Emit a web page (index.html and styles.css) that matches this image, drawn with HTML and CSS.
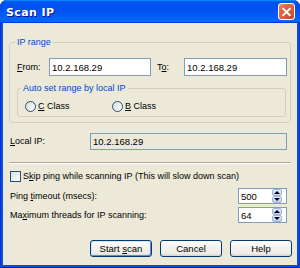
FILE: index.html
```html
<!DOCTYPE html>
<html>
<head>
<meta charset="utf-8">
<link rel="stylesheet" href="styles.css">
</head>
<body>
<div class="window">
  <div class="titlebar">
    <span class="title">Scan IP</span>
    <span class="close" aria-label="Close">
      <svg width="16" height="16" viewBox="0 0 16 16"><path d="M4.5 4.5 L11.5 11.5 M11.5 4.5 L4.5 11.5" stroke="#fff" stroke-width="2" stroke-linecap="square" fill="none"/></svg>
    </span>
  </div>
  <div class="client">
    <fieldset class="group range">
      <legend>IP range</legend>
      <div class="range-row">
        <span class="lbl"><u>F</u>rom:</span>
        <span class="field">10.2.168.29</span>
        <span class="lbl to">T<u>o</u>:</span>
        <span class="field">10.2.168.29</span>
      </div>
      <fieldset class="group auto">
        <legend>Auto set range by local IP</legend>
        <div class="radios">
          <span class="radio"><span class="dot"></span><span><u>C</u> Class</span></span>
          <span class="radio"><span class="dot"></span><span><u>B</u> Class</span></span>
        </div>
      </fieldset>
    </fieldset>

    <div class="local-row">
      <span class="lbl"><u>L</u>ocal IP:</span>
      <span class="field readonly">10.2.168.29</span>
    </div>

    <div class="sep"></div>

    <div class="check-row">
      <span class="checkbox"></span>
      <span>S<u>k</u>ip ping while scanning IP (This will slow down scan)</span>
    </div>

    <div class="spin-row first">
      <span class="lbl">Ping <u>t</u>imeout (msecs):</span>
      <span class="spin">
        <span class="spin-val">500</span>
        <span class="spin-btns"><span class="sb up"></span><span class="sb down"></span></span>
      </span>
    </div>
    <div class="spin-row">
      <span class="lbl">Ma<u>x</u>imum threads for IP scanning:</span>
      <span class="spin">
        <span class="spin-val">64</span>
        <span class="spin-btns"><span class="sb up"></span><span class="sb down"></span></span>
      </span>
    </div>

    <div class="buttons">
      <span class="btn default"><span>Start <u>s</u>can</span></span>
      <span class="btn"><span>Cancel</span></span>
      <span class="btn"><span>Help</span></span>
    </div>
  </div>
</div>
</body>
</html>
```
FILE: styles.css
```css
* { box-sizing: border-box; }
html, body { margin: 0; padding: 0; background: #fff; }
body {
  font-family: "Liberation Sans", Arial, sans-serif;
  font-size: 9px;
  line-height: 11px;
  color: #000;
}
u { text-underline-offset: 1px; }

.window {
  width: 300px;
  height: 268px;
  display: flex;
  flex-direction: column;
  border-radius: 7px 7px 0 0;
  overflow: hidden;
  background: #0B4FDC;
  box-shadow: inset 1px 0 #0831D9, inset -1px 0 #0831D9, inset 0 -1px #001EA0;
}

.titlebar {
  flex: none;
  height: 23px;
  display: flex;
  align-items: center;
  justify-content: space-between;
  padding: 0 5px 0 6px;
  background: linear-gradient(180deg, #0997ff 0, #0053ee 8%, #0050ee 40%, #0066ff 88%, #0066ff 93%, #005bff 95%, #003dd7 96%, #003dd7 100%);
}
.title {
  font-family: "DejaVu Sans", sans-serif;
  font-weight: bold;
  font-size: 11px;
  line-height: 13px;
  letter-spacing: 0.4px;
  color: #fff;
  text-shadow: 1px 1px #0F1089;
  margin-top: 1px;
}
.close {
  width: 17px;
  height: 17px;
  border: 1px solid #fff;
  border-radius: 3px;
  display: flex;
  align-items: center;
  justify-content: center;
  background: radial-gradient(circle at 80% 85%, #CC4628 0, #D9552F 30%, #E26A45 70%, #EC9A80 100%);
}
.close svg { display: block; }

.client {
  flex: 1;
  margin: 0 3px 3px;
  background: #ECE9D8;
  padding: 14px 6px 0 6px;
  display: flex;
  flex-direction: column;
}

.group {
  border: 1px solid #D0D0BF;
  border-radius: 3px;
  margin: 0;
  min-width: 0;
}
.group > legend {
  color: #0046D5;
  padding: 0 2px;
  margin-left: -2px;
  line-height: 11px;
}
.range { padding: 10px 3px 5px 7px; }

.range-row {
  display: grid;
  grid-template-columns: 32px 102px 33px 103px;
  height: 18px;
  align-items: center;
}
.lbl { white-space: nowrap; }
.to { padding-left: 6px; }

.field {
  height: 100%;
  border: 1px solid #7F9DB9;
  background: #fff;
  padding-left: 2px;
  display: flex;
  align-items: center;
  font-size: 9.5px;
}
.field.readonly { background: #ECE9D8; }

.auto {
  margin: 7px 1px 0 0;
  padding: 7px 0 4px 5px;
}
.radios {
  display: flex;
  align-items: center;
  height: 11px;
  padding-left: 2px;
}
.radio {
  display: flex;
  align-items: center;
  width: 87px;
}
.dot {
  width: 11px;
  height: 11px;
  border-radius: 50%;
  border: 1px solid #1C5180;
  background: linear-gradient(135deg, #DCDCD7, #fff);
  margin-right: 2px;
  flex: none;
}

.local-row {
  margin-top: 10px;
  display: grid;
  grid-template-columns: 81px 197px;
  height: 17px;
  align-items: center;
}
.local-row .lbl { padding-left: 1px; }

.sep {
  margin-top: 12px;
  height: 2px;
  border-top: 1px solid #ACA899;
  border-bottom: 1px solid #fff;
}

.check-row {
  margin-top: 7px;
  display: flex;
  align-items: center;
  height: 11px;
  padding-left: 1px;
}
.checkbox {
  width: 11px;
  height: 11px;
  border: 1px solid #1C5180;
  background: linear-gradient(135deg, #DCDCD7, #fff);
  margin-right: 2px;
  flex: none;
}

.spin-row {
  margin-top: 3px;
  display: flex;
  align-items: center;
  justify-content: space-between;
  height: 16px;
  margin-right: 4px;
}
.spin-row.first { margin-top: 6px; }
.spin-row .lbl { padding-left: 1px; }
.spin {
  width: 49px;
  height: 16px;
  border: 1px solid #7F9DB9;
  background: #fff;
  display: flex;
  align-items: center;
}
.spin-val { padding-left: 2px; font-size: 9.5px; }
.spin-btns {
  margin-left: auto;
  margin-right: 4px;
  width: 10px;
  height: 14px;
  display: flex;
  flex-direction: column;
}
.sb {
  flex: 1;
  border: 1px solid #9FB5DE;
  border-radius: 2px;
  background: linear-gradient(180deg, #E6EEFC, #C0D0F2);
  position: relative;
}
.sb::after {
  content: "";
  position: absolute;
  left: 1px;
  width: 0;
  height: 0;
  border-left: 3px solid transparent;
  border-right: 3px solid transparent;
}
.sb.up::after { top: 1px; border-bottom: 3px solid #000; }
.sb.down::after { top: 1px; border-top: 3px solid #000; }

.buttons {
  margin-top: 17px;
  margin-right: -1px;
  display: flex;
  justify-content: flex-end;
  gap: 8px;
}
.btn {
  width: 62px;
  height: 17px;
  border: 1px solid #003C74;
  border-radius: 3px;
  background: linear-gradient(180deg, #fff 0, #F4F3EE 40%, #ECEBE6 85%, #D6D0C5 100%);
  display: flex;
  align-items: center;
  justify-content: center;
  font-size: 9.5px;
}
.btn.default {
  box-shadow: inset 1px 1px #CEE7FF, inset -1px -1px #6982EE;
}
```
